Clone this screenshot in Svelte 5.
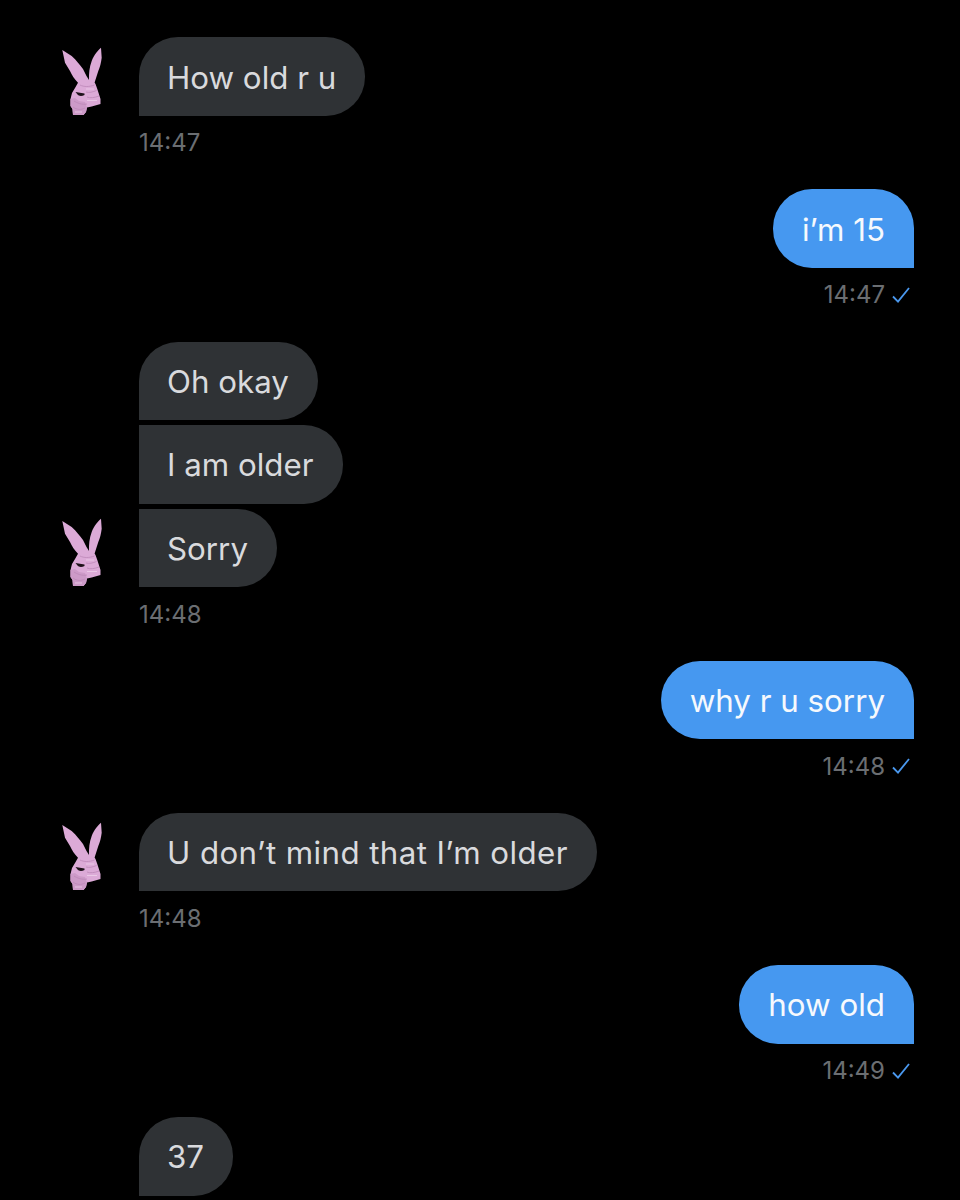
<script>
  const groups = [
    { side: 'in', msgs: ['How old r u'], time: '14:47', avatar: true },
    { side: 'out', msgs: ['i’m 15'], time: '14:47' },
    { side: 'in', msgs: ['Oh okay', 'I am older', 'Sorry'], time: '14:48', avatar: true },
    { side: 'out', msgs: ['why r u sorry'], time: '14:48' },
    { side: 'in', msgs: ['U don’t mind that I’m older'], time: '14:48', avatar: true, wide: true },
    { side: 'out', msgs: ['how old'], time: '14:49' },
    { side: 'in', msgs: ['37'], time: '' }
  ];
</script>

{#snippet bunny()}
  <svg class="bunny" viewBox="0 0 70 75" width="70" height="75" aria-hidden="true">
    <path fill="#dcaad7" d="M12.3 9 L21.7 15 C27 20 30 24 33 28 L36.5 35 L39 39 C38.8 33 39.3 26 41.7 20 C44 14 48 9 51 6.7 L51.7 16.7 C51 22 50 26 48.3 30 L44.6 41.6 L45.5 43 L47.3 48 L50.5 58 L50.5 63 L41.7 65.5 L37 66.5 L36 71 L33.5 74 L23 74 L22.5 68 L20.5 65 L20.5 58 L22 52 L25 47 L28 41.7 C24 38 22 34 20 30 L15 21.7 Z"/>
    <path fill="#cd9ac8" d="M20.5 58 L25 57 L29 60 L35 61 L37 66.5 L36 71 L33.5 74 L23 74 L22.5 68 L20.5 65 Z"/>
    <path fill="#1d1119" d="M25.5 51 L34.5 52.5 L34.5 54 C31.5 55.5 28.5 55 27.5 53.5 Z"/>
    <path fill="none" stroke="#bd88b8" stroke-width="0.8" d="M24 60 C27 62 32 64 37 63 M36 51 C39 52 43 51 46.5 49.5 M37 56 C40 57.5 45 56.5 49 55 M23 66 C27 69 31 69 35 67 M30 44 C34 46 39 46 44.5 44"/>
    <path fill="none" stroke="#eed0ea" stroke-width="0.8" d="M36 48 L44 48 M37 59.5 L47 59.5 M25 71 L32 71"/>
  </svg>
{/snippet}

<main class="chat">
  {#each groups as g}
    <section class="group {g.side}">
      <div class="stack">
        {#each g.msgs as m, i}
          <div class="row">
            {#if g.side === 'in'}
              <div class="gutter">
                {#if g.avatar && i === g.msgs.length - 1}{@render bunny()}{/if}
              </div>
            {/if}
            <div class="bubble" class:first={i === 0} class:wide={g.wide}>{m}</div>
          </div>
        {/each}
      </div>
      {#if g.time}
        <div class="meta">
          <span>{g.time}</span>
          {#if g.side === 'out'}
            <svg class="check" viewBox="0 0 18 16" width="18" height="16" aria-hidden="true">
              <path fill="none" stroke="#4a98ee" stroke-width="1.8" d="M1 9.5 L6 14.6 L17 1"/>
            </svg>
          {/if}
        </div>
      {/if}
    </section>
  {/each}
</main>

<style>
  :global(body) {
    background: #000;
    margin: 0;
  }
  .chat {
    height: 1200px;
    overflow: hidden;
    box-sizing: border-box;
    padding: 37.3px 46px 0 0;
    display: flex;
    flex-direction: column;
    gap: 31.65px;
    background: #000;
    font-family: Inter, "Liberation Sans", sans-serif;
  }
  .group {
    display: flex;
    flex-direction: column;
  }
  .group.out {
    align-items: flex-end;
  }
  .stack {
    display: flex;
    flex-direction: column;
    gap: 5px;
  }
  .row {
    display: flex;
    align-items: flex-end;
  }
  .gutter {
    width: 89px;
    padding-left: 50px;
    flex: none;
    display: flex;
  }
  .bunny {
    display: block;
    flex: none;
  }
  .bubble {
    height: 78.5px;
    box-sizing: border-box;
    padding: 2px 29px 0;
    display: flex;
    align-items: center;
    font-size: 31.3px;
    white-space: nowrap;
  }
  .bubble.wide {
    letter-spacing: 0.4px;
  }
  .in .bubble {
    background: #2f3235;
    color: #d9dadd;
    padding-left: 28px;
    border-radius: 0 39px 39px 0;
  }
  .in .bubble.first {
    border-top-left-radius: 39px;
  }
  .out .bubble {
    background: #4698f0;
    color: #f6f9fd;
    border-radius: 39px 39px 0 39px;
  }
  .meta {
    margin-top: 12px;
    height: 30px;
    display: flex;
    align-items: center;
    gap: 7px;
    font-size: 24px;
    color: #6b6e72;
  }
  .in .meta {
    padding-left: 139px;
  }
  .out .meta {
    padding-right: 4px;
  }
  .check {
    display: block;
  }
</style>
